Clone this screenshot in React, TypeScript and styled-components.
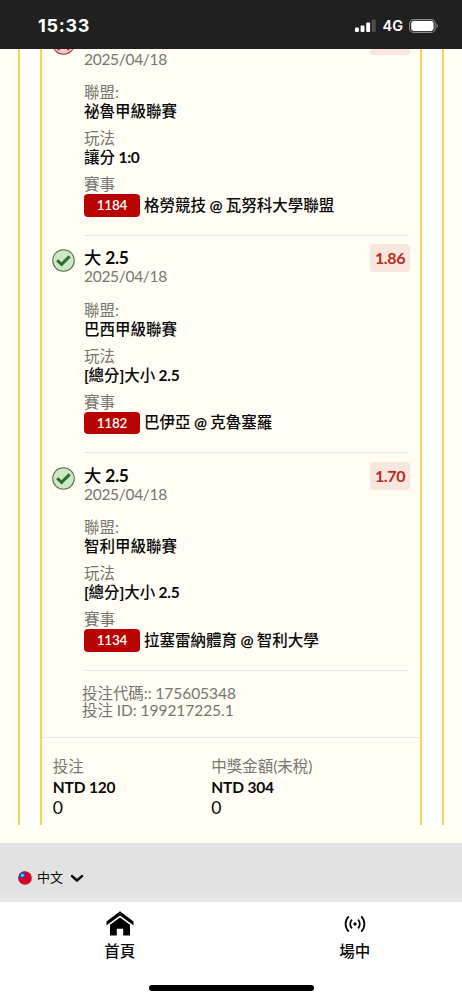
import React from "react";
import styled, { createGlobalStyle } from "styled-components";

const GlobalStyle = createGlobalStyle`
  * { box-sizing: border-box; }
  body {
    margin: 0;
    background: #fff;
    color: #0a0a0a;
    font-family: Lato, "Noto Sans CJK TC", sans-serif;
    font-size: 15.5px;
  }
`;

const Screen = styled.div`
  width: 462px;
  height: 1000px;
  display: flex;
  flex-direction: column;
  overflow: hidden;
`;

const StatusBar = styled.header`
  position: relative;
  z-index: 1;
  flex: none;
  height: 49px;
  background: #202020;
  color: #fff;
  display: flex;
  align-items: center;
  justify-content: space-between;
  padding: 2px 23px 0 38px;
`;

const Clock = styled.span`
  font: 700 18px/22px Inter, sans-serif;
  letter-spacing: 0.7px;
`;

const StatusIcons = styled.div`
  display: flex;
  align-items: center;
  gap: 6px;
  font: 600 14.5px/20px Inter, sans-serif;
`;

const Page = styled.main`
  flex: none;
  height: 853px;
  overflow: hidden;
  display: flex;
  flex-direction: column;
  background: #fffdf4;
`;

const Frame = styled.section`
  flex: none;
  margin: -31px 18px 18px;
  border: solid #fcd54a;
  border-width: 0 2px;
  background: #fff;
  padding: 0 20px;
`;

const Ticket = styled.div`
  border: solid #fcd54a;
  border-width: 0 2px;
  background: #fffdf4;
`;

const LegRow = styled.article`
  height: 217.5px;
  display: flex;
  align-items: flex-start;
  padding: 12.5px 10px 0;
`;

const IconCell = styled.div`
  flex: none;
  width: 32px;
  height: 24px;
  padding-top: 1px;
`;

const LegBody = styled.div`
  flex: 1;
  height: 205px;
  border-bottom: 1px solid #e9e6e1;
  margin-right: -38px;
`;

const LegTitle = styled.div`
  height: 20px;
  font-size: 17.3px;
  line-height: 20px;
  font-weight: 500;
`;

const LegDate = styled.div`
  line-height: 17px;
  color: #777671;
  letter-spacing: -0.3px;
  margin-bottom: 15.5px;
`;

const Field = styled.div`
  margin-bottom: 8px;
`;

const Label = styled.div`
  line-height: 19px;
  color: #777671;
`;

const Value = styled.div`
  line-height: 19px;
  font-weight: 500;
`;

const MatchRow = styled.div`
  display: flex;
  align-items: center;
  gap: 4px;
`;

const Latin = styled.span`
  font-weight: 700;
  letter-spacing: -0.3px;
  white-space: pre;
`;

const MatchCode = styled.span`
  width: 56px;
  height: 22.5px;
  border-radius: 4px;
  background: #b90202;
  color: #fff;
  font-size: 13.5px;
  font-weight: 600;
  letter-spacing: -0.2px;
  line-height: 22.5px;
  text-align: center;
`;

const Odds = styled.div`
  flex: none;
  width: 40px;
  height: 28px;
  margin-top: -4px;
  border-radius: 4px;
  background: #f8e6df;
  color: #b92c22;
  font-size: 16px;
  font-weight: 700;
  letter-spacing: -0.4px;
  line-height: 28px;
  text-align: center;
`;

const TicketIds = styled.div`
  padding: 14px 0 18.5px 40px;
  line-height: 17px;
  letter-spacing: -0.05px;
  color: #777671;
  border-bottom: 1px solid #ebe6e0;
`;

const Totals = styled.div`
  display: grid;
  grid-template-columns: 158.5px 1fr;
  padding: 19px 10px 6px 10.7px;
  height: 87px;
`;

const Amount = styled.div`
  font-weight: 700;
  line-height: 21px;
  padding-top: 1px;
  letter-spacing: -0.15px;
`;

const Points = styled.div`
  font-size: 17.5px;
  line-height: 20px;
`;

const Footer = styled.footer`
  flex: 1;
  background: linear-gradient(#e2e2e2 80%, #e8e8e8);
  padding: 25px 17.5px 0;
`;

const Language = styled.div`
  display: flex;
  align-items: center;
  font-size: 13px;
  line-height: 19px;
`;

const LanguageName = styled.span`
  margin: 0 7px 0 5.5px;
`;

const TabBar = styled.nav`
  flex: none;
  height: 83px;
  background: #fff;
  display: flex;
  justify-content: space-between;
  padding: 9px 0 0;
`;

const Tab = styled.div<{ $width: number }>`
  width: ${(p) => p.$width}px;
  display: flex;
  flex-direction: column;
  align-items: center;
  font-weight: 500;
  line-height: 20px;
`;

const TabIcon = styled.div`
  height: 30px;
  display: flex;
  align-items: center;
  padding-bottom: 4.5px;
`;

const HomeBar = styled.div`
  flex: none;
  align-self: center;
  width: 165px;
  height: 6px;
  border-radius: 3px;
  background: #000;
`;

const ResultIcon = ({ won }: { won: boolean }) => (
  <svg width="23" height="23" viewBox="0 0 23 23" fill="none" display="block">
    <circle cx="11.5" cy="11.5" r="10.8" fill={won ? "#cde8c5" : "#f7cfcb"} stroke={won ? "#567552" : "#c02a3a"} strokeWidth="1.1" />
    {won ? (
      <path d="M5.2 11.2 9.6 15.4 17.6 7.4" stroke="#2f6b2c" strokeWidth="2.9" />
    ) : (
      <path d="m6 6 11 12m0-12L6 18" stroke="#c02a3a" strokeWidth="2.2" />
    )}
  </svg>
);

const Signal = () => (
  <svg width="21" height="14" viewBox="0 0 21 14" fill="#fff" display="block">
    <rect x="0" y="8.5" width="3.9" height="4.5" rx="1" />
    <rect x="5.6" y="6.5" width="3.9" height="6.5" rx="1" />
    <rect x="11.2" y="3.5" width="3.9" height="9.5" rx="1" />
    <rect x="16.8" y="0.5" width="3.9" height="12.5" rx="1" fill="#4d4d4d" />
  </svg>
);

const Battery = () => (
  <svg width="30" height="14" viewBox="0 0 30 14" display="block">
    <rect x="0.6" y="0.6" width="25.6" height="12.8" rx="4" fill="none" stroke="#8c8c8c" strokeWidth="1.1" />
    <rect x="2.2" y="2.1" width="22.4" height="9.8" rx="2.4" fill="#fff" />
    <path d="M27.6 4.6c1.6.7 1.6 4.1 0 4.8z" fill="#8c8c8c" />
  </svg>
);

const Flag = () => (
  <svg width="14" height="14" viewBox="0 0 14 14" display="block">
    <circle cx="7" cy="7" r="6.8" fill="#d80027" />
    <path d="M.2 7A6.8 6.8 0 0 1 7 .2V7z" fill="#1c50b8" />
    <circle cx="4.4" cy="4.2" r="1.5" fill="#9bbcf0" />
  </svg>
);

const Chevron = () => (
  <svg width="14" height="8" viewBox="0 0 14 8" fill="none" display="block">
    <path d="M1.2 1.4 7 6.5 12.8 1.4" stroke="#0a0a0a" strokeWidth="2.4" strokeLinejoin="round" />
  </svg>
);

const Home = () => (
  <svg width="28" height="25" viewBox="0 0 28 25" display="block">
    <path d="M.5 10.4 14 .3l13.5 10.1v3.8L14 4.4.5 14.2z" />
    <path d="M4 13.8 14 6.6l10 7.2v10.7h-6.8v-6.8h-6.4v6.8H4z" />
  </svg>
);

const Live = () => (
  <svg width="22" height="18" viewBox="0 0 22 18" fill="none" stroke="#0a0a0a" strokeWidth="1.8" display="block">
    <circle cx="11" cy="9" r="1.7" fill="#0a0a0a" stroke="none" />
    <path d="M8 4.6a6.2 6.2 0 0 0 0 8.8M14 4.6a6.2 6.2 0 0 1 0 8.8M4.8 1.4a10.6 10.6 0 0 0 0 15.2M17.2 1.4a10.6 10.6 0 0 1 0 15.2" />
  </svg>
);

const Mixed = ({ text }: { text: string }) => (
  <>
    {text.split(/([\x20-\x7e]+)/).map((part, i) => (i % 2 ? <Latin key={i}>{part}</Latin> : part))}
  </>
);

interface Leg {
  won: boolean;
  title?: string;
  odds?: string;
  league: string;
  market: string;
  code: string;
  match: string;
}

const legs: Leg[] = [
  { won: false, league: "祕魯甲級聯賽", market: "讓分 1:0", code: "1184", match: "格勞競技 @ 瓦努科大學聯盟" },
  { won: true, title: "大 2.5", odds: "1.86", league: "巴西甲級聯賽", market: "[總分]大小 2.5", code: "1182", match: "巴伊亞 @ 克魯塞羅" },
  { won: true, title: "大 2.5", odds: "1.70", league: "智利甲級聯賽", market: "[總分]大小 2.5", code: "1134", match: "拉塞雷納體育 @ 智利大學" },
];

export default function App() {
  return (
    <Screen>
      <GlobalStyle />
      <StatusBar>
        <Clock>15:33</Clock>
        <StatusIcons>
          <Signal />
          4G
          <Battery />
        </StatusIcons>
      </StatusBar>
      <Page>
        <Frame>
          <Ticket>
            {legs.map((leg) => (
              <LegRow key={leg.code}>
                <IconCell>
                  <ResultIcon won={leg.won} />
                </IconCell>
                <LegBody>
                  <LegTitle>{leg.title && <Mixed text={leg.title} />}</LegTitle>
                  <LegDate>2025/04/18</LegDate>
                  <Field>
                    <Label>聯盟:</Label>
                    <Value>{leg.league}</Value>
                  </Field>
                  <Field>
                    <Label>玩法</Label>
                    <Value>
                      <Mixed text={leg.market} />
                    </Value>
                  </Field>
                  <Label>賽事</Label>
                  <MatchRow>
                    <MatchCode>{leg.code}</MatchCode>
                    <Value>
                      <Mixed text={leg.match} />
                    </Value>
                  </MatchRow>
                </LegBody>
                <Odds>{leg.odds}</Odds>
              </LegRow>
            ))}
            <TicketIds>
              <div>投注代碼:: 175605348</div>
              <div>投注 ID: 199217225.1</div>
            </TicketIds>
            <Totals>
              <div>
                <Label>投注</Label>
                <Amount>NTD 120</Amount>
                <Points>0</Points>
              </div>
              <div>
                <Label>中獎金額(未稅)</Label>
                <Amount>NTD 304</Amount>
                <Points>0</Points>
              </div>
            </Totals>
          </Ticket>
        </Frame>
        <Footer>
          <Language>
            <Flag />
            <LanguageName>中文</LanguageName>
            <Chevron />
          </Language>
        </Footer>
      </Page>
      <TabBar>
        <Tab $width={239.5}>
          <TabIcon>
            <Home />
          </TabIcon>
          首頁
        </Tab>
        <Tab $width={214.5}>
          <TabIcon>
            <Live />
          </TabIcon>
          場中
        </Tab>
      </TabBar>
      <HomeBar />
    </Screen>
  );
}
